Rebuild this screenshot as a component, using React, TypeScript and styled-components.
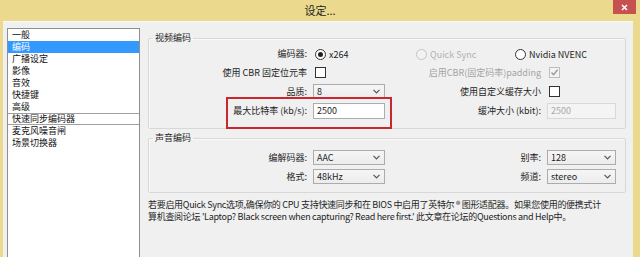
import styled, { createGlobalStyle } from "styled-components";

const GlobalStyle = createGlobalStyle`
  html, body {
    margin: 0;
    padding: 0;
    background: #ebda8e;
  }
  body {
    font-family: "Noto Sans CJK SC", "Liberation Sans", sans-serif;
    font-size: 9px;
    color: #1e1e1e;
  }
`;

const Frame = styled.div`
  width: 640px;
  height: 257px;
  overflow: hidden;
  display: flex;
  flex-direction: column;
  background: #ebda8e;
`;

const TitleBar = styled.div`
  height: 21px;
  flex: none;
  display: grid;
  grid-template-columns: 1fr auto 1fr;
  align-items: start;
`;

const Title = styled.div`
  grid-column: 2;
  margin-top: 3px;
  font-size: 11px;
  line-height: 14px;
  color: #222;
`;

const CloseButton = styled.div`
  grid-column: 3;
  justify-self: end;
  width: 23px;
  height: 14px;
  margin-right: 4px;
  background: #c75050;
  color: #fff;
  display: flex;
  align-items: center;
  justify-content: center;
`;

const Body = styled.div`
  flex: 1;
  margin: 0 7px 0 3px;
  padding: 6px 0 0 4px;
  display: flex;
  background: #f0f0f0;
  border-top: 1px solid #f8f8f8;
  min-height: 0;
`;

const NavList = styled.div`
  width: 131px;
  flex: none;
  background: #fff;
  border: 1px solid #8e8f8f;
  border-bottom: none;
  display: flex;
  flex-direction: column;
`;

const NavItem = styled.div<{ $selected?: boolean; $focused?: boolean }>`
  height: 12px;
  line-height: 12px;
  padding-left: 4px;
  font-size: 9px;
  white-space: nowrap;
  overflow: hidden;
  background: ${(p) => (p.$selected ? "#3399ff" : "transparent")};
  color: ${(p) => (p.$selected ? "#fff" : "#111")};
  box-shadow: ${(p) => (p.$focused ? "inset 0 1px 0 #a0a0a0, inset 0 -1px 0 #a0a0a0" : "none")};
`;

const Panel = styled.div`
  flex: 1;
  margin-left: 8px;
  padding: 3px 7px 0 0;
  position: relative;
  min-width: 0;
`;

const Group = styled.fieldset<{ $gap?: number; $padTop?: number; $padBottom?: number }>`
  margin: ${(p) => p.$gap ?? 0}px 0 0;
  padding: ${(p) => p.$padTop ?? 0}px 0 ${(p) => p.$padBottom ?? 7}px;
  border: 1px solid #d8d8d8;
  border-radius: 2px;
  min-inline-size: 0;
  box-shadow: inset 1px 1px 0 #fafafa;
`;

const Legend = styled.legend`
  margin-left: 4px;
  padding: 0 2px;
  line-height: 14px;
  font-size: 9px;
  color: #1e1e1e;
`;

const FormGrid = styled.div<{ $rows: string }>`
  display: grid;
  grid-template-columns: 158px 72px 150px 69px;
  grid-template-rows: ${(p) => p.$rows};
  column-gap: 6px;
  align-items: center;
`;

const Label = styled.div<{ $col: number; $disabled?: boolean }>`
  grid-column: ${(p) => p.$col};
  justify-self: end;
  white-space: nowrap;
  line-height: 12px;
  color: ${(p) => (p.$disabled ? "#a4a4a4" : "#1e1e1e")};
`;

const Cell = styled.div<{ $col: number; $span?: number; $indent?: number }>`
  grid-column: ${(p) => p.$col} / span ${(p) => p.$span ?? 1};
  padding-left: ${(p) => p.$indent ?? 0}px;
  display: flex;
  align-items: center;
`;

const RadioOption = styled.div<{ $width?: number; $disabled?: boolean }>`
  width: ${(p) => (p.$width ? `${p.$width}px` : "auto")};
  display: flex;
  align-items: center;
  gap: 3px;
  white-space: nowrap;
  color: ${(p) => (p.$disabled ? "#b0b0b0" : "#1e1e1e")};
`;

const RadioCircle = styled.span<{ $checked?: boolean; $disabled?: boolean }>`
  width: 11px;
  height: 11px;
  box-sizing: border-box;
  border-radius: 50%;
  border: 1px solid ${(p) => (p.$disabled ? "#c4c4c4" : "#333")};
  background: ${(p) => (p.$disabled ? "#f2f2f2" : "#fff")};
  display: flex;
  align-items: center;
  justify-content: center;
  flex: none;
  &::after {
    content: "";
    width: 5px;
    height: 5px;
    border-radius: 50%;
    background: #222;
    display: ${(p) => (p.$checked ? "block" : "none")};
  }
`;

const CheckBox = styled.span<{ $disabled?: boolean }>`
  width: 11px;
  height: 11px;
  box-sizing: border-box;
  border: 1px solid ${(p) => (p.$disabled ? "#bdbdbd" : "#333")};
  background: ${(p) => (p.$disabled ? "#f4f4f4" : "#fff")};
  display: flex;
  align-items: center;
  justify-content: center;
  flex: none;
  margin-left: 2px;
`;

const Select = styled.div`
  width: 72px;
  height: 15px;
  box-sizing: border-box;
  border: 1px solid #acacac;
  background: linear-gradient(#f6f6f6, #ececec);
  display: flex;
  align-items: center;
  justify-content: space-between;
  padding: 0 4px 0 3px;
  line-height: 12px;
  color: #1e1e1e;
`;

const TextBox = styled.div<{ $disabled?: boolean }>`
  width: 100%;
  height: 16px;
  box-sizing: border-box;
  border: 1px solid ${(p) => (p.$disabled ? "#d9d9d9" : "#abadb3")};
  background: ${(p) => (p.$disabled ? "#f4f4f4" : "#fff")};
  color: ${(p) => (p.$disabled ? "#a8a8a8" : "#1e1e1e")};
  display: flex;
  align-items: center;
  padding-left: 3px;
  line-height: 12px;
`;

const Note = styled.div`
  margin-top: 6px;
  line-height: 12px;
  white-space: nowrap;
  color: #1e1e1e;
  letter-spacing: -0.3px;
`;

const Highlight = styled.div`
  position: absolute;
  left: 78px;
  top: 69px;
  width: 166px;
  height: 32px;
  box-sizing: border-box;
  border: 2px solid #c8282d;
  pointer-events: none;
`;

const Chevron = () => (
  <svg width="7" height="5" viewBox="0 0 7 5">
    <path d="M0.5 0.8 L3.5 3.8 L6.5 0.8" fill="none" stroke="#555" strokeWidth="1.2" />
  </svg>
);

const Check = ({ color }: { color: string }) => (
  <svg width="9" height="9" viewBox="0 0 9 9">
    <path d="M1.5 4.5 L3.6 6.7 L7.6 1.8" fill="none" stroke={color} strokeWidth="1.4" />
  </svg>
);

const Dropdown = ({ value }: { value: string }) => (
  <Select>
    <span>{value}</span>
    <Chevron />
  </Select>
);

const navItems = ["一般", "编码", "广播设定", "影像", "音效", "快捷键", "高级", "快速同步编码器", "麦克风噪音闸", "场景切换器"];

export default function App() {
  return (
    <>
      <GlobalStyle />
      <Frame>
        <TitleBar>
          <Title>设定...</Title>
          <CloseButton>
            <svg width="7" height="7" viewBox="0 0 7 7">
              <path d="M1 1 L6 6 M6 1 L1 6" stroke="#fff" strokeWidth="1.5" />
            </svg>
          </CloseButton>
        </TitleBar>

        <Body>
          <NavList>
            {navItems.map((item) => (
              <NavItem key={item} $selected={item === "编码"} $focused={item === "快速同步编码器"}>
                {item}
              </NavItem>
            ))}
          </NavList>

          <Panel>
            <Group $padBottom={7}>
              <Legend>视频编码</Legend>
              <FormGrid $rows="18px 19px 19px 20px">
                <Label $col={1}>编码器:</Label>
                <Cell $col={2} $span={3} $indent={2}>
                  <RadioOption $width={101}>
                    <RadioCircle $checked />
                    x264
                  </RadioOption>
                  <RadioOption $width={99} $disabled>
                    <RadioCircle $disabled />
                    Quick Sync
                  </RadioOption>
                  <RadioOption>
                    <RadioCircle />
                    Nvidia NVENC
                  </RadioOption>
                </Cell>

                <Label $col={1}>使用 CBR 固定位元率</Label>
                <Cell $col={2}>
                  <CheckBox />
                </Cell>
                <Label $col={3} $disabled>启用CBR(固定码率)padding</Label>
                <Cell $col={4}>
                  <CheckBox $disabled>
                    <Check color="#9a9a9a" />
                  </CheckBox>
                </Cell>

                <Label $col={1}>品质:</Label>
                <Cell $col={2}>
                  <Dropdown value="8" />
                </Cell>
                <Label $col={3}>使用自定义缓存大小</Label>
                <Cell $col={4}>
                  <CheckBox />
                </Cell>

                <Label $col={1}>最大比特率 (kb/s):</Label>
                <Cell $col={2}>
                  <TextBox>2500</TextBox>
                </Cell>
                <Label $col={3}>缓冲大小 (kbit):</Label>
                <Cell $col={4}>
                  <TextBox $disabled>2500</TextBox>
                </Cell>
              </FormGrid>
            </Group>

            <Group $gap={2} $padTop={3} $padBottom={6}>
              <Legend>声音编码</Legend>
              <FormGrid $rows="19px 19px">
                <Label $col={1}>编解码器:</Label>
                <Cell $col={2}>
                  <Dropdown value="AAC" />
                </Cell>
                <Label $col={3}>别率:</Label>
                <Cell $col={4}>
                  <Dropdown value="128" />
                </Cell>

                <Label $col={1}>格式:</Label>
                <Cell $col={2}>
                  <Dropdown value="48kHz" />
                </Cell>
                <Label $col={3}>频道:</Label>
                <Cell $col={4}>
                  <Dropdown value="stereo" />
                </Cell>
              </FormGrid>
            </Group>

            <Note>
              若要启用Quick Sync选项,确保你的 CPU 支持快速同步和在 BIOS 中启用了英特尔 ® 图形适配器。如果您使用的便携式计
              <br />
              算机查阅论坛 'Laptop? Black screen when capturing? Read here first.' 此文章在论坛的Questions and Help中。
            </Note>

            <Highlight />
          </Panel>
        </Body>
      </Frame>
    </>
  );
}
